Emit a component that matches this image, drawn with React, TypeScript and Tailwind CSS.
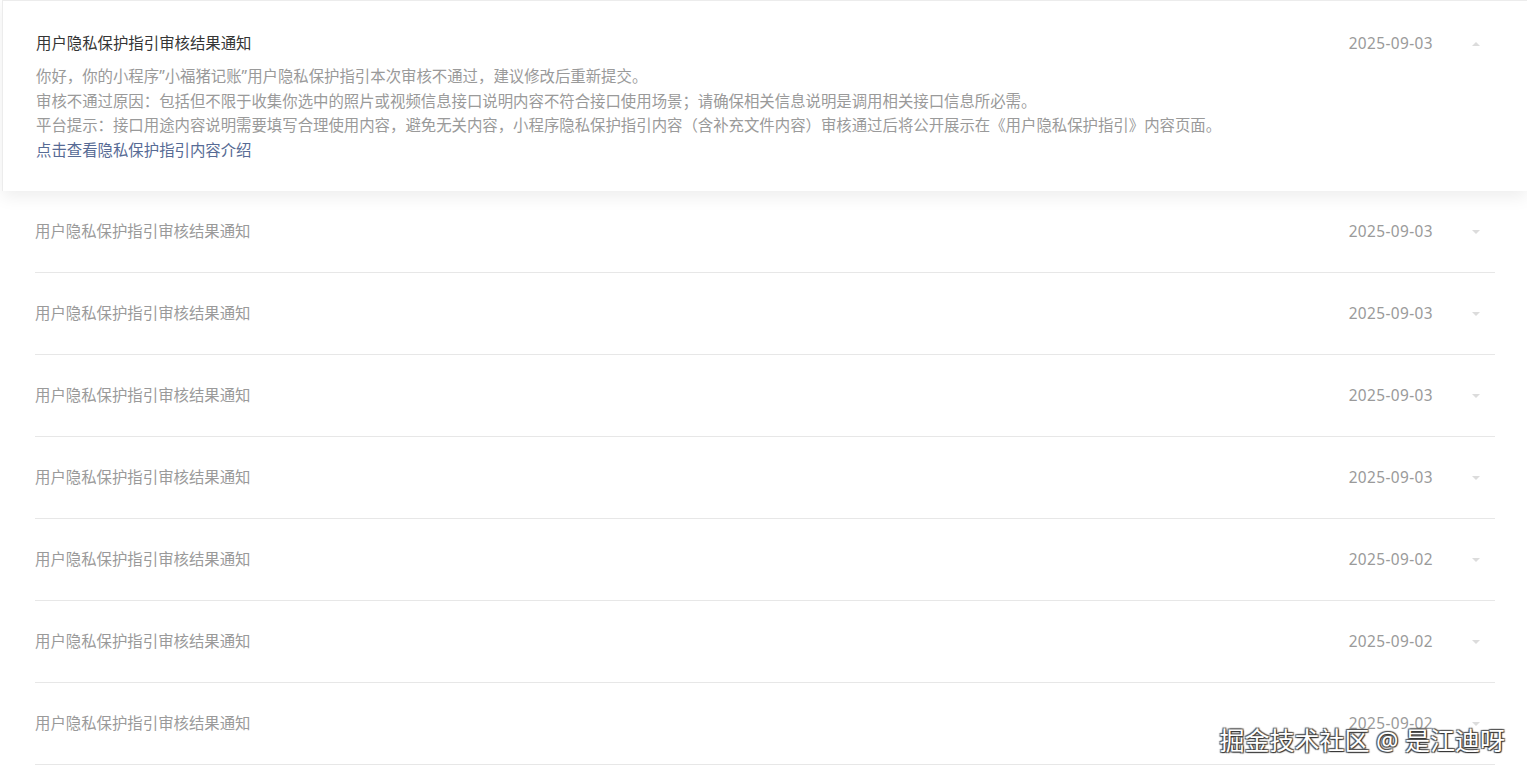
const TITLE = "用户隐私保护指引审核结果通知";

const rows = [
  "2025-09-03",
  "2025-09-03",
  "2025-09-03",
  "2025-09-03",
  "2025-09-02",
  "2025-09-02",
  "2025-09-02",
];

const Arrow = ({ up }: { up?: boolean }) => (
  <span className="ml-[38px] mr-[14px] flex w-[10px] justify-center">
    <svg width="8" height="4" viewBox="0 0 8 4">
      {up ? (
        <path d="M0 4 L4 0 L8 4 Z" fill="#dcdcdc" />
      ) : (
        <path d="M0 0 L4 4 L8 0 Z" fill="#dcdcdc" />
      )}
    </svg>
  </span>
);

const Row = ({ date }: { date: string }) => (
  <div className="flex h-[82px] items-center border-b border-[#e7e7e7] pt-[1px]">
    <span className="flex-1 text-[#9a9a9a]">{TITLE}</span>
    <span className="tracking-[0.4px] text-[#9a9a9a]">{date}</span>
    <Arrow />
  </div>
);

export default function App() {
  return (
    <div
      className="relative h-[779px] overflow-hidden bg-white text-[15.4px]"
      style={{ fontFamily: '"Noto Sans", "Noto Sans CJK SC", sans-serif' }}
    >
      <div className="ml-[2px] border-l border-t border-[#ececec] bg-white pb-[28px] pl-[33px] pr-[32px] pt-[33px] shadow-[0_6px_16px_rgba(0,0,0,0.07)] relative z-10">
        <div className="flex h-[20px] items-center">
          <span className="flex-1 text-[#353535]">{TITLE}</span>
          <span className="tracking-[0.4px] text-[#9a9a9a]">2025-09-03</span>
          <Arrow up />
        </div>
        <div className="mt-[11px] leading-[24.5px] text-[#9a9a9a]">
          <p>你好，你的小程序”小福猪记账”用户隐私保护指引本次审核不通过，建议修改后重新提交。</p>
          <p>审核不通过原因：包括但不限于收集你选中的照片或视频信息接口说明内容不符合接口使用场景；请确保相关信息说明是调用相关接口信息所必需。</p>
          <p>平台提示：接口用途内容说明需要填写合理使用内容，避免无关内容，小程序隐私保护指引内容（含补充文件内容）审核通过后将公开展示在《用户隐私保护指引》内容页面。</p>
          <p className="text-[#576b95]">点击查看隐私保护指引内容介绍</p>
        </div>
      </div>
      <div className="pl-[35px] pr-[32px]">
        {rows.map((d, i) => (
          <Row key={i} date={d} />
        ))}
      </div>
      <div className="absolute bottom-[20px] right-[22px] z-20 text-[25px] text-white [text-shadow:1px_1px_1px_#333,-1px_-1px_1px_#555,1px_-1px_1px_#555,-1px_1px_1px_#555]">
        掘金技术社区 @ 是江迪呀
      </div>
    </div>
  );
}
